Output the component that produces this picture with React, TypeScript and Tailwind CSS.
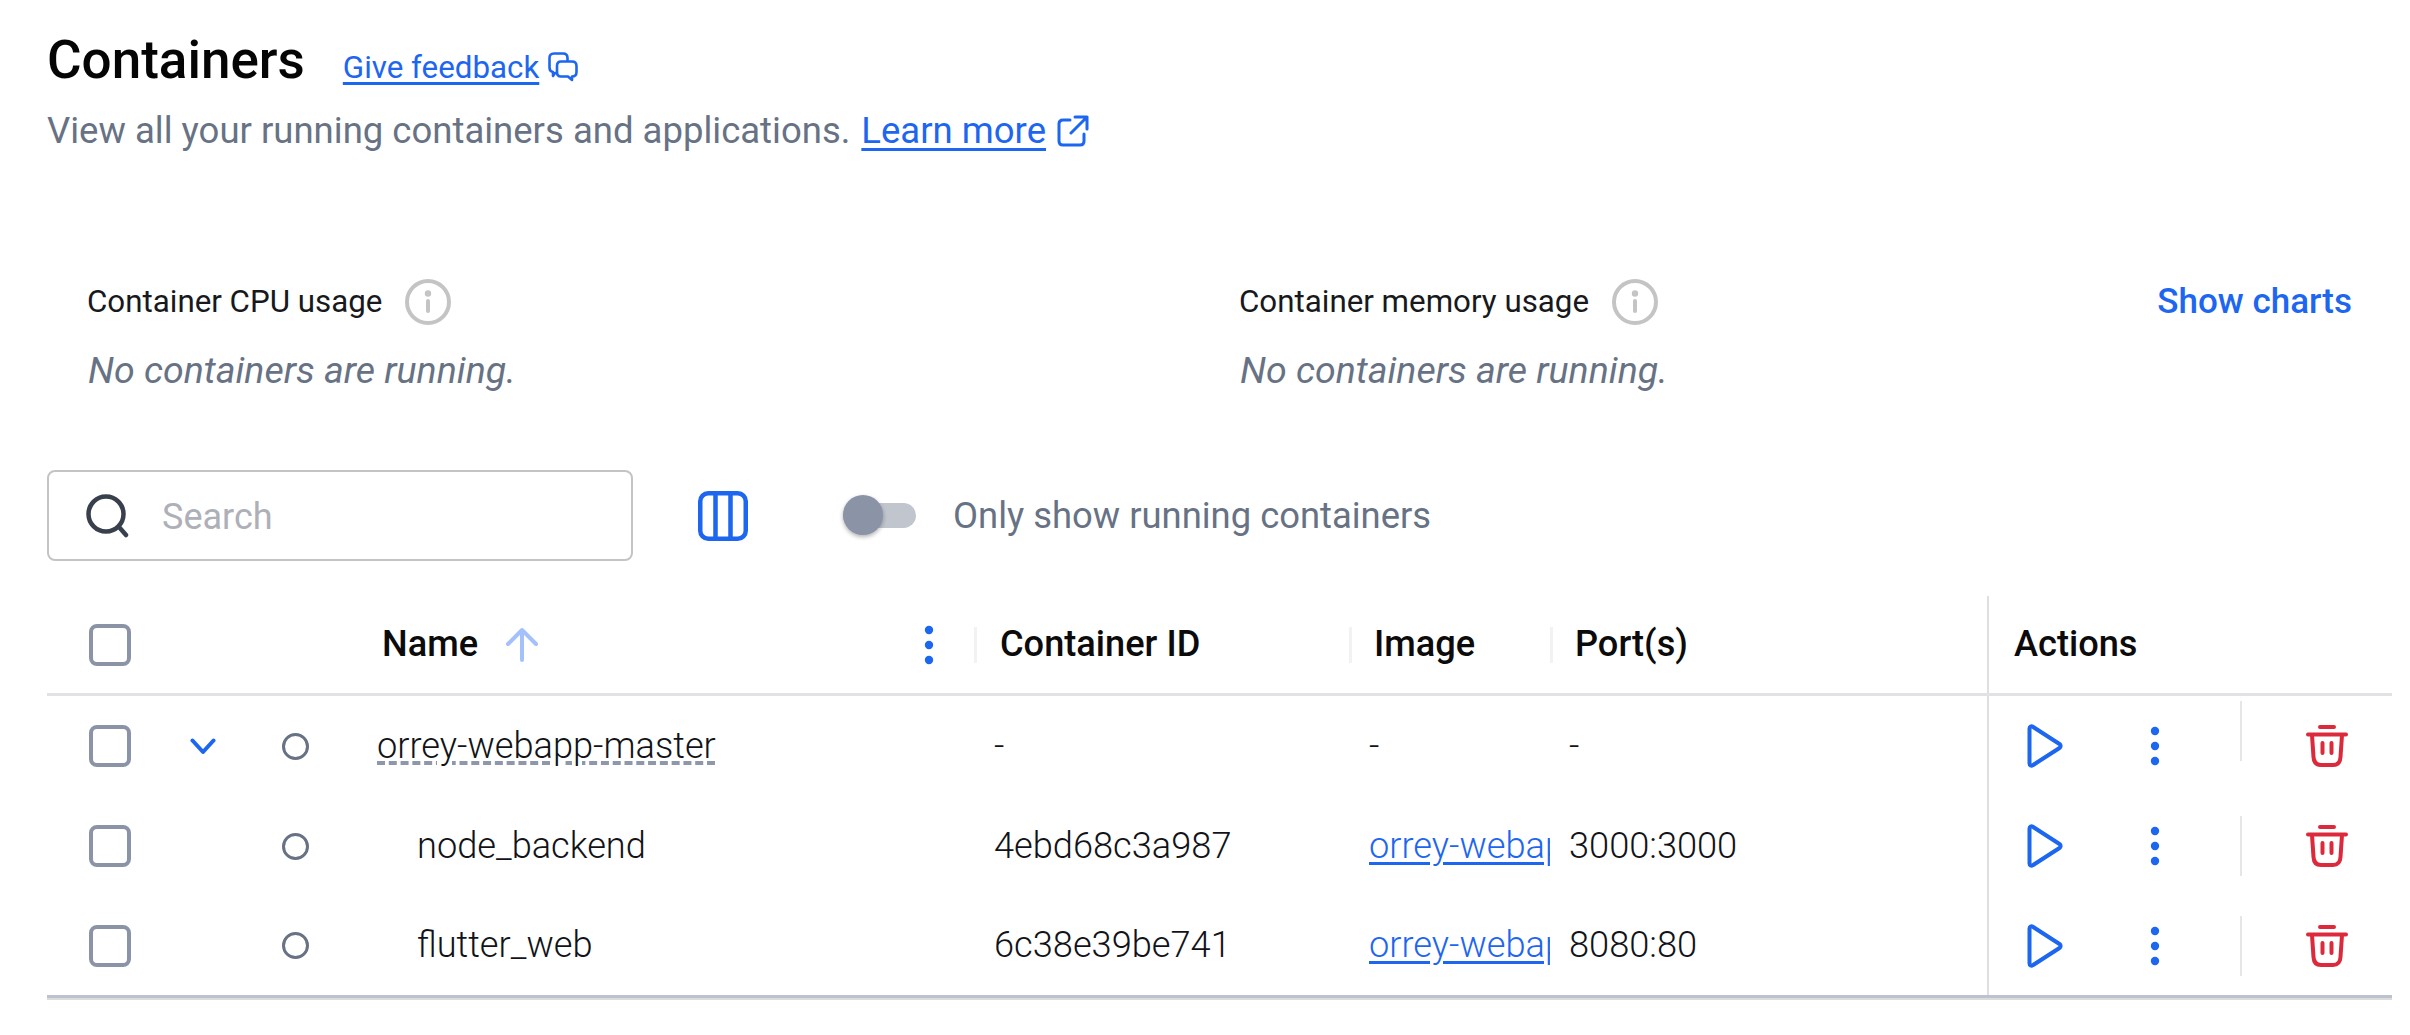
const ROW_COLS = "grid grid-cols-[123px_80px_90px_634px_375px_201px_437px_405px] items-center";

const Checkbox = () => (
    <span className="block size-[42px] rounded-[8px] border-[4px] border-[#8b93a7]"></span>
);

const StatusDot = () => (
    <span className="block size-[27px] rounded-full border-[3px] border-[#677285]"></span>
);

const Dots = ({ className = "" }: { className?: string }) => (
    <svg width="10" height="40" viewBox="0 0 10 40" className={className}>
        <circle cx="5" cy="5" r="4.2" fill="#1d66f0" />
        <circle cx="5" cy="20" r="4.2" fill="#1d66f0" />
        <circle cx="5" cy="35" r="4.2" fill="#1d66f0" />
    </svg>
);

const Play = () => (
    <svg width="36" height="44" viewBox="0 0 36 44" fill="none" className="block">
        <path d="M2.5 4.5C2.5 2.5 4.300 1.700 5.800 2.800L32.500 20C34 21 34 23 32.500 24L5.800 41.200C4.300 42.300 2.500 41.500 2.500 39.500Z" stroke="#1d66f0" strokeWidth="4" strokeLinejoin="round" />
    </svg>
);

const Trash = () => (
    <svg width="42" height="42" viewBox="0 0 42 42" fill="none" stroke="#dc2a3c" strokeWidth="4" strokeLinecap="round" strokeLinejoin="round" className="block">
        <path d="M14 2H28" />
        <path d="M2 9.500H40" />
        <path d="M6 10L7.500 32C7.800 37.500 10.500 40 15 40H27C31.500 40 34.200 37.500 34.500 32L36 10" />
        <path d="M16.500 18V28M25.500 18V28" />
    </svg>
);

const InfoIcon = () => (
    <svg width="46" height="46" viewBox="0 0 46 46" fill="none" stroke="#c4c4c4" strokeWidth="4" strokeLinecap="round">
        <circle cx="23" cy="23" r="21" />
        <path d="M23 22V32" />
        <circle cx="23" cy="14.500" r="1.200" fill="#c4c4c4" />
    </svg>
);

const HeaderCell = ({ label, labelClass = "ml-[22px]" }: { label: string; labelClass?: string }) => (
    <div className="flex h-full items-center">
        <span className="h-[36px] w-[3px] bg-[#f2f2f2]"></span>
        <span className={labelClass + " text-[36.200px] font-medium text-[#0b0b0b]"}>{label}</span>
    </div>
);

const Row = ({ name, indent, id, image, port, chevron, dividerUp, last }: {
    name: string; indent?: boolean; id: string; image?: string; port: string; chevron?: boolean; dividerUp?: boolean; last?: boolean;
}) => (
    <div className={ROW_COLS + " text-[36.200px] font-light text-[#111318] " + (last ? "h-[99px]" : "h-[100px]")}>
        <div className="pl-[42px]"><Checkbox /></div>
        <div className="pl-[20px]">
            {chevron && (
                <svg width="26" height="17" viewBox="0 0 26 17" fill="none" className="block">
                    <path d="M2.500 2.500L13 14L23.500 2.500" stroke="#1d66f0" strokeWidth="4" strokeLinecap="round" strokeLinejoin="round" />
                </svg>
            )}
        </div>
        <div className="pl-[32px]"><StatusDot /></div>
        <div className={indent ? "pl-[77px]" : "pl-[37px]"}>
            {indent ? name : (
                <span className="underline decoration-dashed decoration-[#8f97ab] decoration-[4px] underline-offset-[4px]">{name}</span>
            )}
        </div>
        <div className="pl-[20px]">{id}</div>
        <div className="overflow-hidden whitespace-nowrap pl-[20px]">
            {image ? <a className="text-[#1d66f0] underline underline-offset-[4px]">{image}</a> : "-"}
        </div>
        <div className="pl-[19px]">{port}</div>
        <div className="flex h-full items-center border-l-[2px] border-[#dfdfdf] pl-[38px]">
            <Play />
            <Dots className="ml-[87px]" />
            <span className={"ml-[80px] h-[60px] w-[2px] bg-[#e6e6e6] " + (dividerUp ? "-translate-y-[15px]" : "")}></span>
            <span className="ml-[64px]"><Trash /></span>
        </div>
    </div>
);

const App = () => {
    return (
        <div className="min-h-[1035px] w-full bg-white pl-[47px] pr-[18px] font-['Roboto',sans-serif]">

            <div className="flex h-[60px] items-center pt-[30px] box-content">
                <h1 className="translate-y-[1px] text-[53px] font-medium text-[#050505]">Containers</h1>
                <a className="ml-[38px] mt-[16px] text-[31.300px] text-[#1d66f0] underline underline-offset-[4px]">Give feedback</a>
                <svg width="30" height="30" viewBox="0 0 30 30" fill="none" stroke="#1d66f0" strokeWidth="2.600" strokeLinejoin="round" className="ml-[9px] mt-[14px]">
                    <path d="M9 21H7L5 24V20C2.500 19.500 1.500 18 1.500 15.500V6C1.500 3 3 1.500 6 1.500H15C18 1.500 19.500 3 19.500 6V9" />
                    <path d="M13 9.500H24C27 9.500 28.500 11 28.500 14V20C28.500 23 27 24.500 24 24.500V28L20 24.500H13C10.500 24.500 9 23 9 20V14C9 11 10.500 9.500 13 9.500Z" />
                </svg>
            </div>

            <div className="mt-[16px] mb-[-1px] flex h-[50px] items-center text-[36.500px] text-[#677285]">
                <span>View all your running containers and applications.</span>
                <a className="ml-[11px] text-[#1d66f0] underline underline-offset-[5px]">Learn more</a>
                <svg width="32" height="32" viewBox="0 0 32 32" fill="none" stroke="#1d66f0" strokeWidth="3" strokeLinecap="round" strokeLinejoin="round" className="ml-[11px]">
                    <path d="M13 5H6C3.500 5 2 6.500 2 9V26C2 28.500 3.500 30 6 30H23C25.500 30 27 28.500 27 26V19" />
                    <path d="M18 2H30V14M30 2L14 18" />
                </svg>
            </div>

            <div className="mt-[121px] flex h-[120px] pl-[41px]">
                <div className="w-[1152px]">
                    <div className="-ml-[1px] flex h-[50px] translate-y-[1px] items-center gap-[23px] text-[31.300px] text-[#17191c]">
                        Container CPU usage
                        <InfoIcon />
                    </div>
                    <p className="mt-[19px] text-[37.500px] leading-[50px] italic text-[#677285]">No containers are running.</p>
                </div>
                <div className="flex-1">
                    <div className="-ml-[1px] flex h-[50px] translate-y-[1px] items-center gap-[23px] text-[31.300px] text-[#17191c]">
                        Container memory usage
                        <InfoIcon />
                    </div>
                    <p className="mt-[19px] text-[37.500px] leading-[50px] italic text-[#677285]">No containers are running.</p>
                </div>
                <a className="mr-[40px] flex h-[50px] translate-y-[1px] items-center text-[35px] font-medium text-[#1d66f0]">Show charts</a>
            </div>

            <div className="mt-[74px] flex h-[91px] items-center">
                <div className="flex h-full w-[586px] items-center rounded-[8px] border-[2px] border-[#c4c4c4] pl-[37px]">
                    <svg width="44" height="44" viewBox="0 0 44 44" fill="none" stroke="#39404d" strokeWidth="4.500" strokeLinecap="round">
                        <circle cx="20" cy="20" r="17.500" />
                        <path d="M33 33L40 41" />
                    </svg>
                    <span className="ml-[32px] translate-y-[1px] text-[36px] text-[#aeb0b8]">Search</span>
                </div>
                <svg width="50" height="50" viewBox="0 0 50 50" fill="none" stroke="#1d66f0" strokeWidth="4.500" className="ml-[65px]">
                    <rect x="2.250" y="2.250" width="45.500" height="45.500" rx="8" />
                    <path d="M17.500 2V48M32.500 2V48" />
                </svg>
                <div className="relative ml-[95px] h-[25px] w-[73px] rounded-full bg-[#c0c5ce]">
                    <span className="absolute left-0 top-[-8px] size-[40px] rounded-full bg-[#8b93a7] shadow-[0_2px_4px_rgba(0,0,0,0.3)]"></span>
                </div>
                <span className="ml-[37px] translate-y-[1px] text-[36.400px] text-[#677285]">Only show running containers</span>
            </div>

            <div className="mt-[35px]">
                <div className={ROW_COLS + " h-[100px] border-b-[3px] border-[#e1e2e6]"}>
                    <div className="pl-[42px]"><Checkbox /></div>
                    <div></div>
                    <div></div>
                    <div className="flex h-full items-center pl-[42px] pr-[40px]">
                        <span className="text-[36.200px] font-medium text-[#0b0b0b]">Name</span>
                        <svg width="34" height="36" viewBox="0 0 34 36" fill="none" stroke="#a3c1fb" strokeWidth="4" strokeLinecap="round" strokeLinejoin="round" className="ml-[27px]">
                            <path d="M17 3V33M3 17L17 3L31 17" />
                        </svg>
                        <Dots className="ml-auto" />
                    </div>
                    <HeaderCell label="Container ID" labelClass="ml-[23px]" />
                    <HeaderCell label="Image" />
                    <HeaderCell label="Port(s)" />
                    <div className="flex h-full items-center border-l-[2px] border-[#dfdfdf] pl-[25px]">
                        <span className="text-[36.200px] font-medium text-[#0b0b0b]">Actions</span>
                    </div>
                </div>
                <Row name="orrey-webapp-master" id="-" port="-" chevron dividerUp />
                <Row name="node_backend" indent id="4ebd68c3a987" image="orrey-webapp-master-node_backend" port="3000:3000" />
                <Row name="flutter_web" indent id="6c38e39be741" image="orrey-webapp-master-flutter_web" port="8080:80" last />
                <div className="h-[3px] bg-[#bcc2cf]"></div>
                <div className="h-[2px] bg-[#dcdcdc]"></div>
            </div>
        </div>
    )
}

export default App
